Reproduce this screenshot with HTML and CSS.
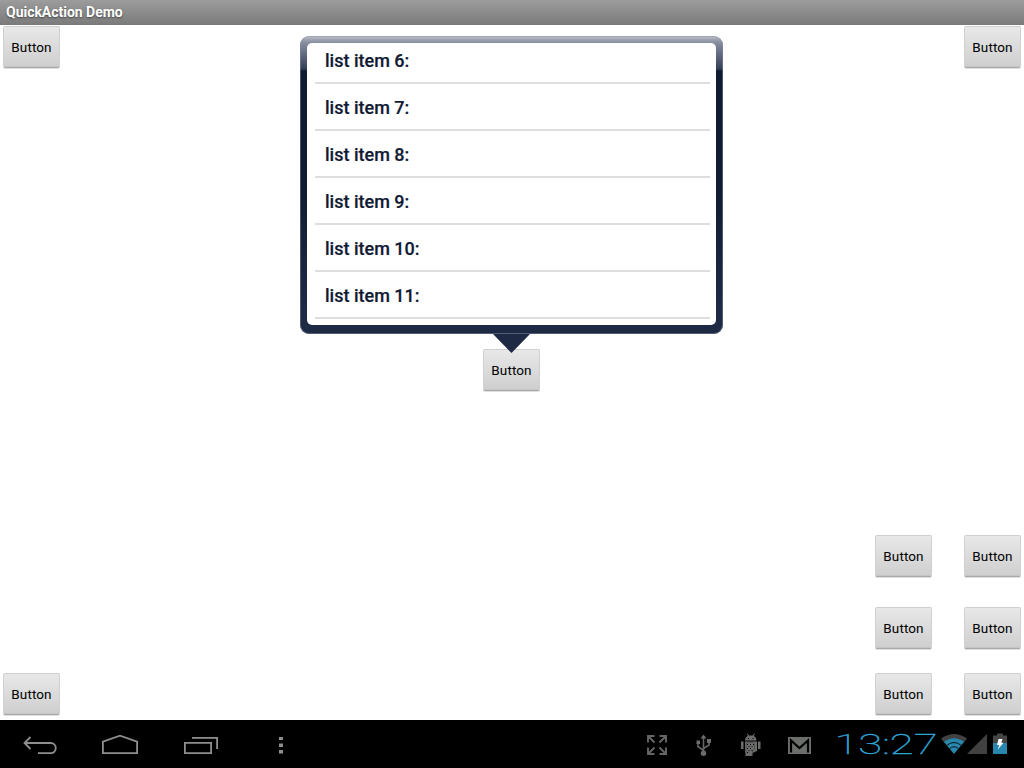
FILE: index.html
```html
<!DOCTYPE html>
<html lang="en">
<head>
<meta charset="utf-8">
<title>QuickAction Demo</title>
<link rel="stylesheet" href="styles.css">
</head>
<body>
<div class="screen">
  <header class="title-bar">QuickAction Demo</header>
  <main class="content">
    <div class="row row-top"><button class="btn">Button</button><button class="btn">Button</button></div>
    <div class="row row-center"><button class="btn">Button</button></div>
    <div class="row row-upper"><button class="btn">Button</button><button class="btn">Button</button></div>
    <div class="row row-lower"><button class="btn">Button</button><button class="btn">Button</button></div>
    <div class="row row-bottom"><button class="btn first">Button</button><button class="btn">Button</button><button class="btn">Button</button></div>
    <section class="popup">
      <ul class="list">
        <li>list item 6:</li>
        <li>list item 7:</li>
        <li>list item 8:</li>
        <li>list item 9:</li>
        <li>list item 10:</li>
        <li>list item 11:</li>
      </ul>
      <svg class="arrow" width="38" height="19" viewBox="0 0 38 19"><path d="M1 0H38L19.500 19Z" fill="#1e2a44"/></svg>
    </section>
  </main>
  <footer class="system-bar">
    <svg class="nav" width="310" height="48" viewBox="0 1 310 48" fill="none" stroke="#8e8e8e" stroke-width="1.8">
      <path d="M30.500 18L24.500 24L30.500 30M24.500 24H50.500C57.500 24 57.500 34.100 50.500 34.100H38"/>
      <path d="M102.900 34.100V22.600L120 16.600L137.100 22.600V34.100Z"/>
      <path d="M184.900 23.900H211.100V34.100H184.900ZM192 18.900H217.100V30"/>
      <path d="M279 18h4v3h-4zM279 24.500h4v3.500h-4zM279 31h4v3.500h-4z" fill="#8e8e8e" stroke="none"/>
    </svg>
    <div class="status">
      <svg width="200" height="48" viewBox="630 0 200 48">
        <g fill="none" stroke="#646664" stroke-width="1.900">
          <path d="M648 22.500V16H654.500M648 16L654.500 22.500M659.500 16H666V22.500M666 16L659.500 22.500M648 27.500V34H654.500M648 34L654.500 27.500M659.500 34H666V27.500M666 34L659.500 27.500"/>
          <path d="M703.500 17V34M703.500 30.500L698 26.500V22M703.500 28.500L709 25V20" stroke-width="1.600"/>
        </g>
        <g fill="#6c6e6c">
          <path d="M700.500 18.500L703.500 14.500L706.500 18.500ZM696.500 20.500h3.500v3.500h-3.500zM707 19h4v4h-4z"/>
          <circle cx="703.500" cy="33.300" r="2.700"/>
          <path d="M745 20.500C745 17.500 746.500 16.500 748 15.900L746.600 13.800L747.400 13.400L749 15.500H752.500L754.200 13.400L755 13.800L753.600 15.900C755 16.500 756.500 17.500 756.500 20.500ZM741 21.500h2.500v7.500H741zM758 21.500h2.500v7.500H758zM745 21.500H757V31L752.500 33V36H745.500V33H745Z"/>
          <path d="M788 17H811V34H788Z"/>
        </g>
        <path d="M748 18h1v1h-1zM752.500 18h1v1h-1zM747 24h1v1h-1zM750 24h1v1h-1zM748.500 26h1v1h-1zM751.500 26h1v1h-1zM747 28h1v1h-1zM750 28h1v1h-1zM748.500 30h1v1h-1zM747 32h1v1h-1zM751.500 30h1v1h-1zM753 24h1v1h-1z" fill="#000"/>
        <path d="M746 33V23.500L748 22.500H753L754.500 24V29L752.500 30.500V32.500" fill="none" stroke="#333" stroke-width=".5"/>
        <path d="M791 32.500V20.500L799.500 28L808 20.500V32.500" fill="none" stroke="#000" stroke-width="2.200"/>
      </svg>
      <svg width="194" height="48" viewBox="830 0 194 48">
        <text class="clock" x="834.500" y="34" textLength="103" lengthAdjust="spacingAndGlyphs">13:27</text>
        <path d="M941 18.500Q954 9.500 967 18.500L963.500 23Q954 16.500 944.500 23Z" fill="#414141"/>
        <path d="M944 22Q954 14.500 964 22L954 34Z" fill="#2787ad"/>
        <path d="M946.500 25.500Q954 19.500 961.500 25.500M949.500 28.500Q954 25 958.500 28.500" fill="none" stroke="#08151b" stroke-width="1"/>
        <path d="M967 34L987 14V34Z" fill="#414141"/>
        <path d="M993 15.500H997V13.500H1003V15.500H1007V34H993Z" fill="#454545"/>
        <path d="M993 23H1007V34H993Z" fill="#2787ad"/>
        <path d="M998.500 19H1002.500L1001.300 22.700H1003.500L997.800 29.500L999.300 25H997Z" fill="#fff"/>
      </svg>
    </div>
  </footer>
</div>
</body>
</html>
```
FILE: styles.css
```css
* { box-sizing: border-box; }

body {
  margin: 0;
  background: #fff;
  font-family: Roboto, "Liberation Sans", sans-serif;
}

.screen {
  display: flex;
  flex-direction: column;
  width: 1024px;
  height: 768px;
  overflow: hidden;
}

.title-bar {
  height: 25px;
  padding-left: 6px;
  background: linear-gradient(#9c9c9c, #7a7a7a);
  color: #fff;
  font-size: 14px;
  font-weight: 700;
  letter-spacing: -0.02px;
  line-height: 25px;
  text-shadow: 0 1px 2px #444;
}

.content {
  position: relative;
  display: flex;
  flex-direction: column;
  height: 695px;
  padding: 1px 3px 5px;
}

.row { display: flex; height: 42px; }
.row-top { justify-content: space-between; }
.row-center { margin-top: 281px; padding-left: 480px; }
.row-upper { margin-top: 144px; }
.row-lower { margin-top: 30px; }
.row-bottom { margin-top: 24px; }

.row-upper,
.row-lower,
.row-bottom {
  justify-content: flex-end;
  gap: 32px;
}

.first { margin-right: auto; }

.btn {
  width: 57px;
  height: 42px;
  padding: 0 0 1px;
  border: 1px solid #d0d0d0;
  border-bottom-color: #a8a8a8;
  border-radius: 2px;
  background: linear-gradient(#e8e8e8, #cfcfcf 39px, #bdbdbd 40px);
  box-shadow: 0 1px 0 rgba(0, 0, 0, 0.12);
  color: #000;
  font: 400 13.5px Roboto, "Liberation Sans", sans-serif;
  letter-spacing: 0.1px;
}

.popup {
  position: absolute;
  top: 11px;
  left: 300px;
  width: 423px;
  height: 298px;
  padding: 7px 7px 9px;
  border-radius: 9px;
  background: linear-gradient(#c3c6ce 0, #a2a7b3 3px, #858c9f 7px, #343e56 33px, #0e1b30 35px, #101c31 160px, #1e2a44 270px);
  box-shadow: inset 0 0 0 1px rgba(130, 140, 165, 0.5);
}

.list {
  height: 282px;
  margin: 0;
  padding: 0 6px 0 8px;
  border-radius: 5px;
  background: #fff;
  list-style: none;
  overflow: hidden;
}

.list li {
  height: 47px;
  padding-left: 10px;
  border-bottom: 2px solid #dedede;
  color: #101a33;
  font-size: 18px;
  font-weight: 500;
  line-height: 47px;
  -webkit-text-stroke: 0.2px #101a33;
}

.list li:first-child { height: 41px; line-height: 35px; }

.arrow {
  position: absolute;
  top: 298px;
  left: 192px;
}

.system-bar {
  display: flex;
  justify-content: space-between;
  height: 48px;
  background: #000;
}

.status { display: flex; }

.clock {
  fill: #30a9dc;
  stroke: #30a9dc;
  stroke-width: 0.35px;
  font-family: Roboto, sans-serif;
  font-size: 28px;
  font-weight: 100;
}
```
